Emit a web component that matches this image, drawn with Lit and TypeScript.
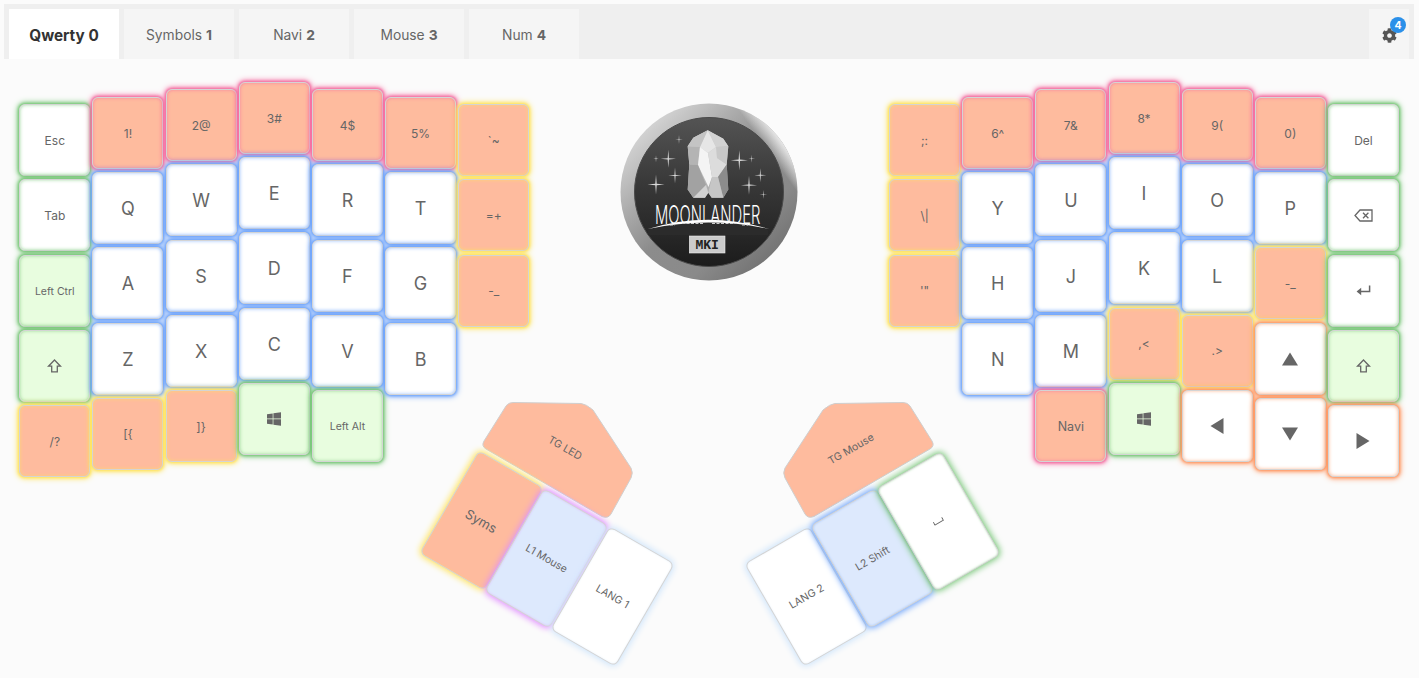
import { LitElement, html, css, svg } from "lit";
import { customElement } from "lit/decorators.js";

type K = { l?: string; i?: string; s?: string; g: string; f?: string };
type Col = { top: number; keys: K[] };

const C: Record<string, string> = {
  b: "#6ba2fb", g: "#76c676", p: "#f4699f", y: "#ffe35c", o: "#ff9660", v: "#e08bff", l: "#cfe5fb", n: "transparent",
};

const ICONS: Record<string, unknown> = {
  shift: svg`<svg class="ic" width="15" height="14" viewBox="0 0 15 14"><path d="M7.5 1 L13.5 7.2 H10.3 V12.8 H4.7 V7.2 H1.5 Z" fill="none" stroke="#666" stroke-width="1.3" stroke-linejoin="miter"/></svg>`,
  win: svg`<svg class="ic" width="14" height="14" viewBox="0 0 14 14"><path fill="#666" d="M0 2.2 L5.7 1.4 V6.6 H0 Z M6.4 1.3 L14 0.2 V6.6 H6.4 Z M0 7.3 H5.7 V12.6 L0 11.8 Z M6.4 7.3 H14 V13.8 L6.4 12.7 Z"/></svg>`,
  bksp: svg`<svg class="ic" width="19" height="13" viewBox="0 0 19 13"><path d="M6 1 H18 V12 H6 L1 6.5 Z" fill="none" stroke="#666" stroke-width="1.3"/><path d="M9 3.8 L14.4 9.2 M14.4 3.8 L9 9.2" stroke="#666" stroke-width="1.3"/></svg>`,
  enter: svg`<svg class="ic" width="15" height="12" viewBox="0 0 15 12"><path d="M13.6 0.5 V6.5 H2.5" fill="none" stroke="#666" stroke-width="1.5"/><path d="M5.2 2.8 V10.2 L0.6 6.5 Z" fill="#666"/></svg>`,
  up: svg`<svg class="ic" width="16" height="14" viewBox="0 0 16 14"><path d="M8 0.5 L16 13.5 H0 Z" fill="#666"/></svg>`,
  down: svg`<svg class="ic" width="16" height="14" viewBox="0 0 16 14"><path d="M8 13.5 L16 0.5 H0 Z" fill="#666"/></svg>`,
  left: svg`<svg class="ic" width="14" height="16" viewBox="0 0 14 16"><path d="M0.5 8 L13.5 0 V16 Z" fill="#666"/></svg>`,
  right: svg`<svg class="ic" width="14" height="16" viewBox="0 0 14 16"><path d="M13.5 8 L0.5 0 V16 Z" fill="#666"/></svg>`,
  space: svg`<svg class="ic" width="11" height="5" viewBox="0 0 11 5"><path d="M0.6 0.5 V3.8 H10.4 V0.5" fill="none" stroke="#666" stroke-width="1"/></svg>`,
};

const L = (l: string, g: string, f?: string): K => ({ l, g, s: "lg", f });
const S = (l: string, g: string, f?: string): K => ({ l, g, s: "sm", f });
const P = (l: string, g: string): K => ({ l, g, f: "peach", s: "sm" });
const I = (i: string, g: string, f?: string): K => ({ i, g, f });

const LEFT: Col[] = [
  { top: 22.3, keys: [S("Esc", "g"), S("Tab", "g"), { l: "Left Ctrl", g: "g", f: "green", s: "xs" }, I("shift", "g", "green"), P("/?", "y")] },
  { top: 15, keys: [P("1!", "p"), L("Q", "b"), L("A", "b"), L("Z", "b"), P("[{", "y")] },
  { top: 7.3, keys: [P("2@", "p"), L("W", "b"), L("S", "b"), L("X", "b"), P("]}", "y")] },
  { top: 0, keys: [P("3#", "p"), L("E", "b"), L("D", "b"), L("C", "b"), I("win", "g", "green")] },
  { top: 7.3, keys: [P("4$", "p"), L("R", "b"), L("F", "b"), L("V", "b"), { l: "Left Alt", g: "g", f: "green", s: "xs" }] },
  { top: 15, keys: [P("5%", "p"), L("T", "b"), L("G", "b"), L("B", "b")] },
  { top: 22.3, keys: [P("`~", "y"), P("=+", "y"), P("-_", "y")] },
];

const RIGHT: Col[] = [
  { top: 22.3, keys: [P(";:", "y"), P("\\|", "y"), P("'\"", "y")] },
  { top: 15, keys: [P("6^", "p"), L("Y", "b"), L("H", "b"), L("N", "b")] },
  { top: 7.3, keys: [P("7&", "p"), L("U", "b"), L("J", "b"), L("M", "b"), { l: "Navi", g: "p", f: "peach", s: "md" }] },
  { top: 0, keys: [P("8*", "p"), L("I", "b"), L("K", "b"), P(",<", "y"), I("win", "g", "green")] },
  { top: 7.3, keys: [P("9(", "p"), L("O", "b"), L("L", "b"), P(".>", "y"), I("left", "o")] },
  { top: 15, keys: [P("0)", "p"), L("P", "b"), P("-_", "y"), I("up", "o"), I("down", "o")] },
  { top: 22.3, keys: [S("Del", "g"), I("bksp", "g"), I("enter", "g"), I("shift", "g", "green"), I("right", "o")] },
];

type T = { cx: number; cy: number; r: number; l?: string; i?: string; g: string; f?: string; s: string };
const THUMBS: T[] = [
  { cx: 481, cy: 520.5, r: 30, l: "Syms", g: "y", f: "peach", s: "md2" },
  { cx: 546.5, cy: 558.5, r: 30, l: "L1 Mouse", g: "v", f: "ice", s: "xs2" },
  { cx: 612.5, cy: 596.5, r: 30, l: "LANG 1", g: "l", s: "xs2" },
  { cx: 806.5, cy: 596.5, r: -30, l: "LANG 2", g: "l", s: "xs2" },
  { cx: 872.5, cy: 558.5, r: -30, l: "L2 Shift", g: "b", f: "ice", s: "xs2" },
  { cx: 938, cy: 521, r: -30, i: "space", g: "g", s: "xs2" },
];

const star = (x: number, y: number, r: number) => {
  const w = Math.max(r * 0.07, 0.3);
  return svg`<path fill="#d8d8d8" d="M${x} ${y - r} L${x + w} ${y - w} L${x + r * 0.85} ${y} L${x + w} ${y + w} L${x} ${y + r} L${x - w} ${y + w} L${x - r * 0.85} ${y} L${x - w} ${y - w} Z"/>`;
};

const STARS = [[59, 36.5, 4.5], [48.3, 55.8, 9], [36, 55.8, 3.5], [55, 72.5, 8], [36, 81.5, 10], [119.3, 57.2, 10], [131.7, 55.8, 4], [140.3, 72.2, 7], [129, 82.2, 9.5], [143.3, 91.5, 4.5]];

const logo = html`<svg class="logo" width="178" height="178" viewBox="0 0 178 178">
  <defs>
    <linearGradient id="ring" x1="0.12" y1="0.1" x2="0.88" y2="0.92">
      <stop offset="0" stop-color="#d9d9d9"/><stop offset="0.3" stop-color="#a9a9a9"/>
      <stop offset="0.5" stop-color="#8c8c8c"/><stop offset="0.75" stop-color="#8a8a8a"/><stop offset="1" stop-color="#6e6e6e"/>
    </linearGradient>
    <linearGradient id="ringHi" x1="1" y1="0" x2="0.3" y2="0.5">
      <stop offset="0.12" stop-color="#fff" stop-opacity="0"/><stop offset="0.22" stop-color="#f4f4f4" stop-opacity=".95"/>
      <stop offset="0.34" stop-color="#fff" stop-opacity="0"/>
    </linearGradient>
    <linearGradient id="inner" x1="0" y1="0" x2="0" y2="1">
      <stop offset="0" stop-color="#545454"/><stop offset="0.45" stop-color="#383838"/><stop offset="1" stop-color="#1c1c1c"/>
    </linearGradient>
    <linearGradient id="cr" x1="0" y1="0" x2="0.5" y2="1">
      <stop offset="0" stop-color="#e4e4e4"/><stop offset="1" stop-color="#a8a8a8"/>
    </linearGradient>
  </defs>
  <circle cx="89" cy="89" r="88.5" fill="url(#ring)"/>
  <circle cx="89" cy="89" r="88.5" fill="url(#ringHi)"/>
  <circle cx="89" cy="89" r="74.5" fill="url(#inner)" stroke="#4a4a4a" stroke-width="1"/>
  ${STARS.map(([x, y, r]) => star(x, y, r))}
  <path fill="url(#cr)" d="M87.7 27.2 L103.3 35.8 L108.3 43.2 L106.7 61.5 L108.3 86.5 L103.3 94.8 L91.7 94.8 L88.3 89.8 L85 94.8 L73.3 94.8 L67.7 86.5 L69.3 61.5 L67.7 43.2 L73.3 34.8 Z"/>
  <path fill="#e6e6e6" d="M87.7 27.2 L80 44 L88 50 L96 44 Z"/>
  <path fill="#c4c4c4" d="M87.7 27.2 L73.3 34.8 L67.7 43.2 L80 44 Z"/>
  <path fill="#d2d2d2" d="M87.7 27.2 L103.3 35.8 L108.3 43.2 L96 44 Z"/>
  <path fill="#b4b4b4" d="M67.7 43.2 L69.3 61.5 L78 62 L80 44 Z"/>
  <path fill="#c8c8c8" d="M108.3 43.2 L106.7 61.5 L97 55 L96 44 Z"/>
  <path fill="#f4f4f4" d="M80 44 L88 50 L92 74 L88.5 84 L78 62 Z"/>
  <path fill="#dcdcdc" d="M96 44 L97 55 L106.7 61.5 L98 74 L92 74 L88 50 Z"/>
  <path fill="#a2a2a2" d="M69.3 61.5 L78 62 L86 82 L73.3 94.8 L67.7 86.5 Z"/>
  <path fill="#d2d2d2" d="M73.3 94.8 L86 82 L88.3 89.8 L85 94.8 Z"/>
  <path fill="#8c8c8c" d="M98 74 L106.7 61.5 L108.3 86.5 L103.3 94.8 Z"/>
  <path fill="#c6c6c6" d="M92 74 L98 74 L103.3 94.8 L91.7 94.8 L88.3 89.8 Z"/>
  <text class="ml" transform="translate(35 121) scale(1 1.7)">MOONLANDER</text>
  <path fill="#2b2b2b" d="M28 127 Q88 107 148 127 V132 H28 Z"/>
  <path fill="#fff" d="M28 126 Q88 107.5 149 126 Q88 113 28 126 Z"/>
  <path d="M50 122 h5 M62 120.5 h22 M92 120.5 h24 M122 122 h6" stroke="#cfcfcf" stroke-width="1" stroke-dasharray="3 1.5"/>
  <rect x="69.3" y="133" width="35.7" height="17" fill="#cbcbcb" stroke="#eee" stroke-width=".6"/>
  <text class="mk" x="87.2" y="146.2" text-anchor="middle">MKI</text>
</svg>`;

const TG_PATH = "M33 2.5 L101 3.5 Q106 4 113 10 L151 68 Q153.5 73 151 78 L131 114 Q128 119 122 116.5 L6 49 Q1 46 4 41 L26 6 Q28.5 2.5 33 2.5 Z";

@customElement("app-root")
export class AppRoot extends LitElement {
  static styles = css`
    :host { display: block; height: 100vh; overflow: hidden; background: #fbfbfb; font-family: Inter, "Liberation Sans", sans-serif; color: #666; }
    .head { display: flex; justify-content: space-between; margin: 4px 5px 0 4px; padding: 5px 5px 0; background: #efefef; height: 50px; }
    .tabs { display: flex; gap: 5px; }
    .tab { width: 110px; height: 50px; box-sizing: border-box; padding-top: 2px; display: flex; align-items: center; justify-content: center; gap: 4px; background: #f5f5f5; font-size: 13.8px; color: #666; }
    .tab b { font-weight: 700; }
    .tab.on { background: #fff; color: #333; font-weight: 700; font-size: 15.3px; }
    .cog { position: relative; width: 40px; height: 50px; background: #f5f5f5; display: flex; align-items: center; justify-content: center; }
    .cog svg { width: 15px; height: 15px; margin-top: 2px; fill: #555; }
    .badge { position: absolute; left: 21px; top: 8px; width: 16px; height: 16px; border-radius: 50%; background: #2b90e9; color: #fff; font-size: 10.5px; font-weight: 700; display: flex; align-items: center; justify-content: center; }
    .main { position: relative; display: flex; justify-content: space-between; align-items: flex-start; padding: 23px 20px 0 19.3px; }
    .board { display: flex; gap: 2.17px; }
    .col { display: flex; flex-direction: column; gap: 3.2px; }
    .key { width: 71px; height: 72px; box-sizing: border-box; border: 1px solid #d4d4d4; border-radius: 6px; background: #fff; display: flex; align-items: center; justify-content: center; color: #666; text-align: center;
      box-shadow: 0 0 3px 0.8px var(--g), 0 0 6px 0.8px var(--g), inset 0 0 4px -1px var(--g); }
    .peach { background: #febb9e; }
    .green { background: #e8fddf; }
    .ice { background: #dde9fd; }
    .lg { font-size: 18px; padding-top: 1px; }
    .md { font-size: 12.5px; }
    .md2 { font-size: 13px; }
    .sm { font-size: 12px; }
    .xs { font-size: 10.5px; padding-top: 1px; }
    .xs2 { font-size: 10.5px; }
    .ic { display: block; }
    .logo { display: block; margin-top: 21px; }
    .ml { font-family: Inter, sans-serif; font-weight: 300; font-size: 14.8px; fill: #fff; }
    .mk { font-family: "Liberation Mono", monospace; font-size: 13px; font-weight: 700; fill: #222; }
    .thumb { position: absolute; width: 75px; height: 119px; padding-top: 0; box-shadow: 0 0 6px 1.5px var(--g), inset 0 0 3px -1px var(--g); }
    .tg { position: absolute; width: 155px; height: 120px; }
    .tg svg { display: block; }
    .tg path { fill: #febb9e; stroke: #cfcfcf; stroke-width: 1; }
    .flip svg { transform: scaleX(-1); }
    .tgl { position: absolute; font-size: 10.5px; white-space: nowrap; color: #666; transform: translate(-50%, -50%) rotate(var(--r)); }
  `;

  private key(k: K) {
    return html`<div class="key ${k.f ?? ""} ${k.s ?? ""}" style="--g:${C[k.g]}">${k.i ? ICONS[k.i] : k.l}</div>`;
  }

  private board(cols: Col[]) {
    return html`<div class="board">
      ${cols.map((c) => html`<div class="col" style="margin-top:${c.top}px">${c.keys.map((k) => this.key(k))}</div>`)}
    </div>`;
  }

  private tg(x: number, y: number, flip: boolean, label: string, lx: number, ly: number, r: number) {
    return html`<div class="tg ${flip ? "flip" : ""}" style="left:${x}px;top:${y - 59}px">
      <svg width="155" height="120" viewBox="0 0 155 120"><path d=${TG_PATH}></path></svg>
      <span class="tgl" style="left:${lx}px;top:${ly}px;--r:${r}deg">${label}</span>
    </div>`;
  }

  render() {
    const tabs = [["Symbols", "1"], ["Navi", "2"], ["Mouse", "3"], ["Num", "4"]];
    return html`
      <div class="head">
        <div class="tabs">
          <div class="tab on">Qwerty 0</div>
          ${tabs.map(([n, d]) => html`<div class="tab">${n} <b>${d}</b></div>`)}
        </div>
        <div class="cog">
          <svg viewBox="0 0 512 512"><path d="M487.4 315.7l-42.6-24.6c4.3-23.2 4.3-47 0-70.2l42.6-24.6c4.9-2.8 7.1-8.6 5.5-14-11.1-35.6-30-67.8-54.7-94.6-3.8-4.1-10-5.1-14.8-2.3L380.8 110c-17.9-15.4-38.5-27.3-60.8-35.1V25.8c0-5.6-3.9-10.5-9.4-11.7-36.7-8.2-74.3-7.8-109.2 0-5.5 1.2-9.4 6.1-9.4 11.7V75c-22.2 7.9-42.8 19.8-60.8 35.1L88.7 85.5c-4.9-2.8-11-1.9-14.8 2.3-24.7 26.7-43.6 58.9-54.7 94.6-1.7 5.4.6 11.2 5.5 14L67.3 221c-4.3 23.2-4.3 47 0 70.2l-42.6 24.6c-4.9 2.8-7.1 8.6-5.5 14 11.1 35.6 30 67.8 54.7 94.6 3.8 4.1 10 5.1 14.8 2.3l42.6-24.6c17.9 15.4 38.5 27.3 60.8 35.1v49.2c0 5.6 3.9 10.5 9.4 11.7 36.7 8.2 74.3 7.8 109.2 0 5.5-1.2 9.4-6.1 9.4-11.7v-49.2c22.2-7.9 42.8-19.8 60.8-35.1l42.6 24.6c4.9 2.8 11 1.9 14.8-2.3 24.7-26.7 43.6-58.9 54.7-94.6 1.5-5.5-.7-11.3-5.6-14.1zM256 336c-44.1 0-80-35.9-80-80s35.9-80 80-80 80 35.9 80 80-35.9 80-80 80z"/></svg>
          <span class="badge">4</span>
        </div>
      </div>
      <div class="main">
        ${this.board(LEFT)}
        ${logo}
        ${this.board(RIGHT)}
        ${this.tg(480, 400, false, "TG LED", 85, 48, 30)}
        ${this.tg(781, 400, true, "TG Mouse", 70, 49, -30)}
        ${THUMBS.map(
          (t) => html`<div class="key thumb ${t.f ?? ""} ${t.s}" style="--g:${C[t.g]};left:${t.cx - 37.5}px;top:${t.cy - 59.5 - 59}px;transform:rotate(${t.r}deg)">
            ${t.i ? ICONS[t.i] : t.l}
          </div>`
        )}
      </div>
    `;
  }
}
